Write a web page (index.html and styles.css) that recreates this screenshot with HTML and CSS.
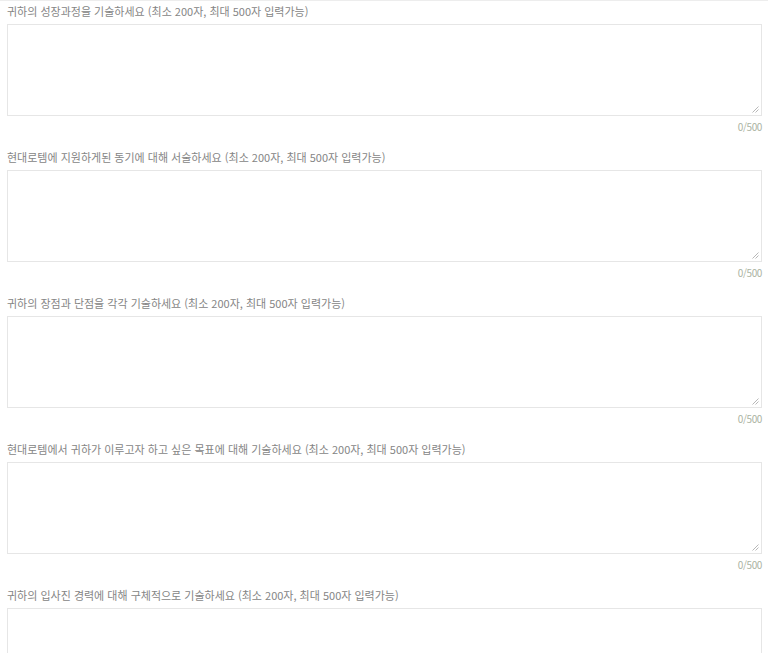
FILE: index.html
```html
<!DOCTYPE html>
<html lang="ko">
<head>
<meta charset="utf-8">
<title>자기소개서</title>
<link rel="stylesheet" href="styles.css">
</head>
<body>
<div class="page">
  <div class="item">
    <label class="label">귀하의 성장과정을 기술하세요 (최소 200자, 최대 500자 입력가능)</label>
    <div class="box"><textarea class="field"></textarea><svg class="grip" width="7" height="7" viewBox="0 0 7 7"><path d="M6.5 0.5 L0.5 6.5 M6.5 3.5 L3.5 6.5" stroke="#b8b8b8" stroke-width="1" fill="none"/></svg></div>
    <div class="count">0/500</div>
  </div>
  <div class="item">
    <label class="label">현대로템에 지원하게된 동기에 대해 서술하세요 (최소 200자, 최대 500자 입력가능)</label>
    <div class="box"><textarea class="field"></textarea><svg class="grip" width="7" height="7" viewBox="0 0 7 7"><path d="M6.5 0.5 L0.5 6.5 M6.5 3.5 L3.5 6.5" stroke="#b8b8b8" stroke-width="1" fill="none"/></svg></div>
    <div class="count">0/500</div>
  </div>
  <div class="item">
    <label class="label">귀하의 장점과 단점을 각각 기술하세요 (최소 200자, 최대 500자 입력가능)</label>
    <div class="box"><textarea class="field"></textarea><svg class="grip" width="7" height="7" viewBox="0 0 7 7"><path d="M6.5 0.5 L0.5 6.5 M6.5 3.5 L3.5 6.5" stroke="#b8b8b8" stroke-width="1" fill="none"/></svg></div>
    <div class="count">0/500</div>
  </div>
  <div class="item">
    <label class="label">현대로템에서 귀하가 이루고자 하고 싶은 목표에 대해 기술하세요 (최소 200자, 최대 500자 입력가능)</label>
    <div class="box"><textarea class="field"></textarea><svg class="grip" width="7" height="7" viewBox="0 0 7 7"><path d="M6.5 0.5 L0.5 6.5 M6.5 3.5 L3.5 6.5" stroke="#b8b8b8" stroke-width="1" fill="none"/></svg></div>
    <div class="count">0/500</div>
  </div>
  <div class="item">
    <label class="label">귀하의 입사진 경력에 대해 구체적으로 기술하세요 (최소 200자, 최대 500자 입력가능)</label>
    <div class="box"><textarea class="field"></textarea><svg class="grip" width="7" height="7" viewBox="0 0 7 7"><path d="M6.5 0.5 L0.5 6.5 M6.5 3.5 L3.5 6.5" stroke="#b8b8b8" stroke-width="1" fill="none"/></svg></div>
    <div class="count">0/500</div>
  </div>
</div>
</body>
</html>
```
FILE: styles.css
```css
html, body {
  margin: 0;
  padding: 0;
  background: #ffffff;
}
body {
  font-family: "Noto Sans CJK KR", "Noto Sans", sans-serif;
  overflow: hidden;
  border-top: 1px solid #ededed;
  height: 652px;
}
.page {
  padding: 0 6px 0 7px;
}
.item {
  display: flex;
  flex-direction: column;
  margin-bottom: 13px;
}
.label {
  display: block;
  margin-top: 2px;
  margin-bottom: 5px;
  font-size: 11px;
  line-height: 16px;
  color: #858585;
  letter-spacing: 0;
}
.box {
  position: relative;
}
.field {
  display: block;
  box-sizing: border-box;
  width: 100%;
  height: 92px;
  margin: 0;
  padding: 6px 8px;
  border: 1px solid #e6e6e6;
  border-radius: 0;
  background: #fff;
  resize: none;
  font-family: inherit;
  font-size: 12px;
  outline: none;
}
.grip {
  position: absolute;
  right: 3px;
  bottom: 3px;
  display: block;
}
.count {
  margin-top: 4px;
  font-size: 10px;
  line-height: 14px;
  text-align: right;
  color: #aab3a2;
  letter-spacing: -0.4px;
}
```
